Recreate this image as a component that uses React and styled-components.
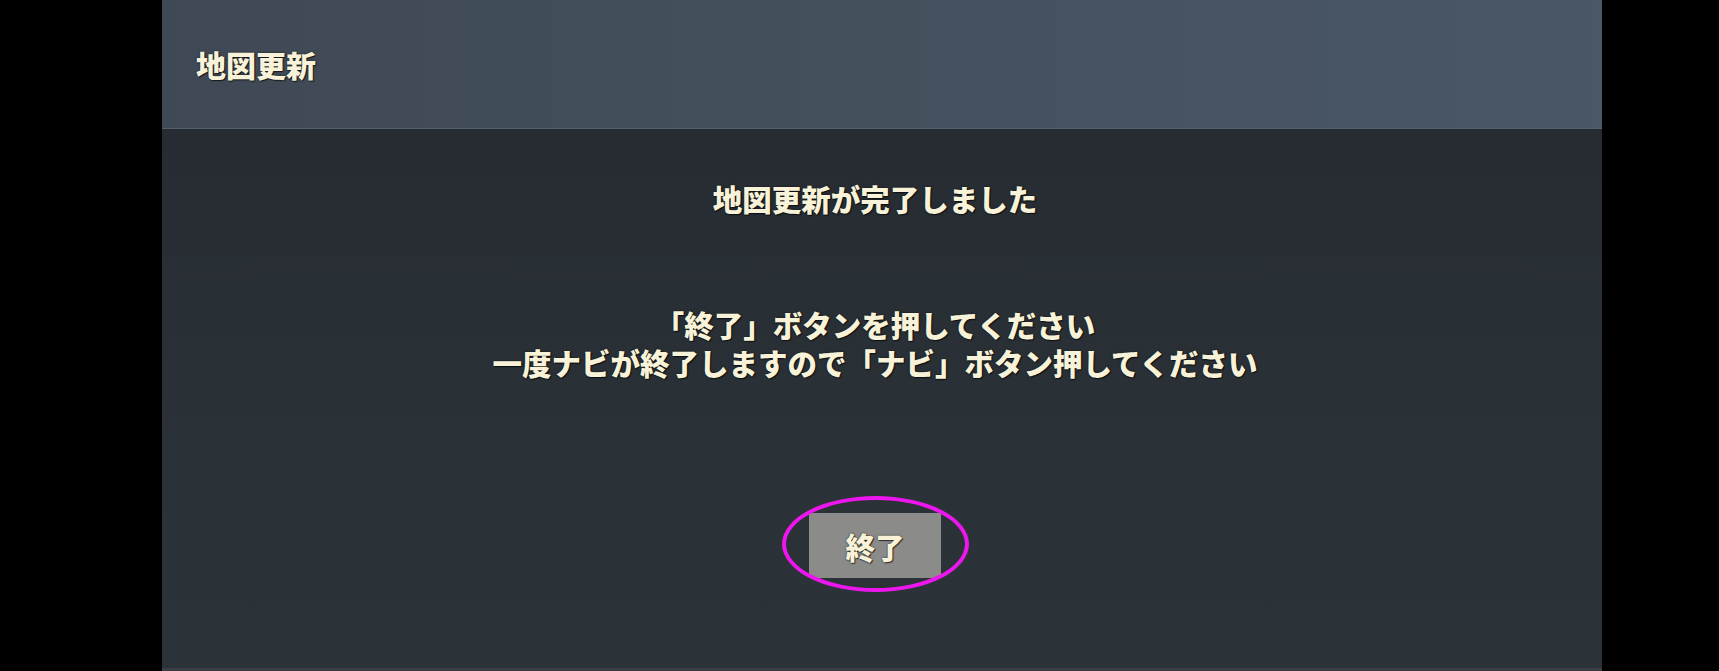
import React from "react";
import styled, { createGlobalStyle } from "styled-components";

const GlobalStyle = createGlobalStyle`
  html, body {
    margin: 0;
    padding: 0;
    background: #000;
  }
  body {
    font-family: "Noto Sans CJK JP", "Noto Sans", sans-serif;
  }
`;

const Frame = styled.div`
  display: flex;
  width: 1719px;
  height: 671px;
  background: #000;
  overflow: hidden;
`;

const SideBar = styled.div`
  flex: 0 0 ${(p) => p.width}px;
  background: #000;
`;

const Screen = styled.div`
  flex: 0 0 1440px;
  display: flex;
  flex-direction: column;
  border-bottom: 3px solid #3a3f44;
  box-sizing: border-box;
`;

const Header = styled.header`
  height: 129px;
  display: flex;
  align-items: center;
  padding-left: 34px;
  box-sizing: border-box;
  background: linear-gradient(90deg, #3f4955 0%, #45515e 55%, #4a5767 100%);
  border-bottom: 1px solid #53606c;
`;

const Label = styled.span`
  font-size: ${(p) => p.size || 29.5}px;
  font-weight: 900;
  line-height: 38px;
  color: #f7f2d8;
  text-shadow: 0 0 2px rgba(0, 0, 0, 0.7), 1px 1px 1px rgba(0, 0, 0, 0.6);
  white-space: nowrap;
`;

const Main = styled.main`
  flex: 1;
  display: flex;
  flex-direction: column;
  align-items: center;
  padding-top: 50px;
  padding-right: 14px;
  background: linear-gradient(180deg, #262c32 0%, #2a3137 60%, #2c3338 100%);
`;

const Message = styled.div`
  display: flex;
  flex-direction: column;
  align-items: center;
  margin-top: 88px;
`;

const ButtonWrap = styled.div`
  position: relative;
  margin-top: 132px;
`;

const EndButton = styled.button`
  width: 132px;
  height: 65px;
  display: flex;
  align-items: center;
  justify-content: center;
  padding: 0;
  border: none;
  background: #8b8b89;
  font-family: inherit;
  cursor: pointer;
`;

const Mark = styled.div`
  position: absolute;
  left: -27px;
  top: -17px;
  width: 179px;
  height: 88px;
  border: 4px solid #ee16ee;
  border-radius: 50%;
  pointer-events: none;
`;

export default function App() {
  return (
    <>
      <GlobalStyle />
      <Frame>
        <SideBar width={162} />
        <Screen>
          <Header>
            <Label size={30}>地図更新</Label>
          </Header>
          <Main>
            <Label>地図更新が完了しました</Label>
            <Message>
              <Label>「終了」ボタンを押してください</Label>
              <Label>一度ナビが終了しますので「ナビ」ボタン押してください</Label>
            </Message>
            <ButtonWrap>
              <EndButton>
                <Label>終了</Label>
              </EndButton>
              <Mark />
            </ButtonWrap>
          </Main>
        </Screen>
        <SideBar width={117} />
      </Frame>
    </>
  );
}
